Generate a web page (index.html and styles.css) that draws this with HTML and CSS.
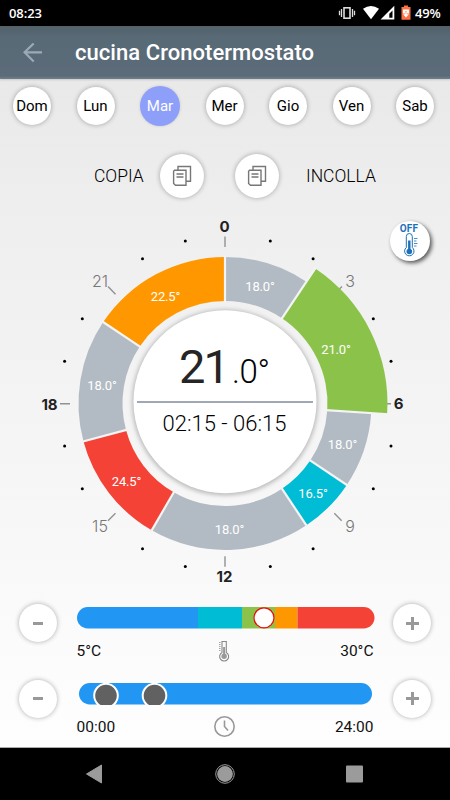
FILE: index.html
```html
<!DOCTYPE html>
<html lang="it">
<head>
<meta charset="utf-8">
<title>cucina Cronotermostato</title>
<link rel="stylesheet" href="styles.css">
</head>
<body>
<div class="screen">
  <header class="status">
    <span class="clock">08:23</span>
    <svg class="status-icons" width="80" height="26" viewBox="0 0 80 26">
      <g fill="none" stroke="#ddd" stroke-width="1.3"><rect x="9" y="7.8" width="6" height="10.4" stroke-width="1.6"/><path d="M6.500 9v8M4.500 10.800v4.400M17.500 9v8M19.500 10.800v4.400"/></g>
      <path fill="#fff" d="M28 8.800Q36 3.200 44 8.800L36 19.200Z"/>
      <path fill="#fff" fill-rule="evenodd" d="M59.300 5.800V19.500H45.500ZM57.500 10.500L54.300 13.700V17.800H57.500Z"/>
      <path fill="#ff7043" d="M69 5.500h4v1.500h2.500v12.700h-9V7H69Z"/>
      <path fill="#fff" d="M68 9.500h6v4h-2v-2h-2v2h-2zM70.300 12h1.400v2.200h2.200L71 17.400L68.100 14.200h2.200z"/>
    </svg>
    <span class="percent">49%</span>
  </header>
  <div class="appbar">
    <svg class="back" width="20" height="20" viewBox="0 0 20 20"><path d="M19 9.300H1.500M10.700 .500L1.500 9.300L10.700 18.500" fill="none" stroke="#9caab6" stroke-width="2.200"/></svg>
    <h1>cucina Cronotermostato</h1>
  </div>
  <nav class="days">
    <button>Dom</button><button>Lun</button><button class="active">Mar</button><button>Mer</button><button>Gio</button><button>Ven</button><button>Sab</button>
  </nav>
  <div class="clipboard">
    <span class="copy">COPIA</span>
    <button><svg width="20" height="22" viewBox="0 0 20 22"><path d="M6 4.600V1.500H18.500V16.300H14.500M2.500 5.300H14V20.300H3.500L1.600 18.500V6.200ZM4.500 9h7M4.500 12h7" fill="none" stroke="#777" stroke-width="1.400"/></svg></button>
    <button><svg width="20" height="22" viewBox="0 0 20 22"><path d="M6 4.600V1.500H18.500V16.300H14.500M2.500 5.300H14V20.300H3.500L1.600 18.500V6.200ZM4.500 9h7M4.500 12h7" fill="none" stroke="#777" stroke-width="1.400"/></svg></button>
    <span class="paste">INCOLLA</span>
  </div>
  <main class="dial">
    <svg id="dial" width="450" height="386" viewBox="0 209 450 386">
      <defs><filter id="soft" x="-20%" y="-20%" width="140%" height="140%"><feGaussianBlur stdDeviation="2.200"/></filter></defs>
      <g id="dots"></g>
      <path class="tick" d="M225 236.500V247M60 403.700H70M380 403.700H391M225 556.300V566.700M108 286.500L115.500 294.300M342 286.500L334 294.300M108 520.700L115.500 513.300M341.700 520.700L334.300 513.300"/>
      <g id="segments"></g>
      <circle cx="225" cy="402.500" r="93" class="halo" filter="url(#soft)"/>
      <circle cx="225" cy="401.700" r="91.500" fill="#fff"/>
      <path d="M137 402H313" stroke="#a0a7b5" stroke-width="2"/>
      <g class="hour major"><text x="224.500" y="232">0</text><text x="398.500" y="409">6</text><text x="224.500" y="582">12</text><text x="49.500" y="409.500">18</text></g>
      <g class="hour"><text x="350" y="286.500">3</text><text x="350" y="532">9</text><text x="100" y="532">15</text><text x="100" y="286.500">21</text></g>
      <g id="labels" class="seg-label"></g>
      <text class="big" x="179" y="383" textLength="51">21</text>
      <text class="decimal" x="232" y="383" textLength="38">.0°</text>
      <text class="range" x="224.500" y="431" textLength="124">02:15 - 06:15</text>
    </svg>
    <div class="off">
      <svg width="40" height="40" viewBox="0 0 40 40"><text class="off-text" x="19" y="11">OFF</text><g fill="none" stroke="#1d70b7" stroke-width="1"><path d="M16.300 26.500V15.500a3 3 0 0 1 6 0V26.500a4.700 4.700 0 1 1-6 0Z"/><path d="M24 17.500h3.500M24 20h2.500M24 22.500h3.500M24 25h2.500" stroke-width=".8"/></g><circle cx="19.300" cy="30.500" r="2.800" fill="#1d70b7"/><path d="M19.300 30.500V19.500" stroke="#1d70b7" stroke-width="2.400"/></svg>
    </div>
  </main>
  <section class="control temperature">
    <button class="minus" aria-label="-"></button>
    <div class="slider">
      <svg class="track" width="298" height="22" viewBox="0 0 298 22"><defs><clipPath id="t"><rect width="297.500" height="21.500" rx="10.750"/></clipPath></defs><g clip-path="url(#t)"><path fill="#2196f3" d="M0 0H121V22H0z"/><path fill="#00bcd4" d="M121 0H165V22H121z"/><path fill="#8bc34a" d="M165 0H198V22H165z"/><path fill="#ff9800" d="M198 0H220.500V22H198z"/><path fill="#f44336" d="M220.500 0H298V22H220.500z"/></g><circle cx="187" cy="10.800" r="10" fill="#fff" stroke="#f00c0c" stroke-width="1.200"/></svg>
      <div class="scale"><span>5°C</span>
      <svg width="16" height="24" viewBox="0 0 16 24"><path d="M5.500 13.500V2.500H9.800V13.500a4.500 4.500 0 1 1-4.300 0Z" fill="none" stroke="#888" stroke-width="1.100"/><circle cx="7.600" cy="17.300" r="2.700" fill="#999"/><path d="M7.600 17V8" stroke="#999" stroke-width="2"/><path d="M2.500 3.500h1.500M2.500 5.500h1.500M2.500 7.500h1.500M2.500 9.500h1.500M2.500 11.500h1.500" stroke="#999" stroke-width=".9"/></svg>
      <span>30°C</span></div>
    </div>
    <button class="plus" aria-label="+"></button>
  </section>
  <section class="control time">
    <button class="minus" aria-label="-"></button>
    <div class="slider">
      <svg class="track" width="298" height="22" viewBox="0 0 298 22"><rect x="2" width="293" height="21.500" rx="10.750" fill="#2196f3"/><g fill="#616161" stroke="#fff" stroke-width="2"><circle cx="29" cy="12.600" r="11.800"/><circle cx="77.500" cy="12.600" r="11.800"/></g></svg>
      <div class="scale"><span>00:00</span>
      <svg width="24" height="24" viewBox="0 0 24 24"><g fill="none" stroke="#999" stroke-width="1.600"><circle cx="12" cy="11.500" r="9.700"/><path d="M12 5.500V11.500L15.500 15.500"/></g></svg>
      <span>24:00</span></div>
    </div>
    <button class="plus" aria-label="+"></button>
  </section>
  <footer class="navbar">
    <svg width="20" height="20" viewBox="0 0 20 20"><path d="M1.500 10L16.500 1V19Z" fill="#9b9b9b" stroke="#9b9b9b" stroke-linejoin="round"/></svg>
    <svg width="20" height="20" viewBox="0 0 20 20"><circle cx="10" cy="10" r="9.300" fill="none" stroke="#9b9b9b"/><circle cx="10" cy="10" r="7.900" fill="#9b9b9b"/></svg>
    <svg width="20" height="20" viewBox="0 0 20 20"><rect x="1" y="1.500" width="17" height="17" rx="1" fill="#9b9b9b"/></svg>
  </footer>
</div>
<script src="dial.js"></script>
</body>
</html>
```
FILE: dial.js
```js
const cx = 225, cy = 403.5;
const point = (hour, r) => {
  const a = hour * Math.PI / 12;
  return [cx + r * Math.sin(a), cy - r * Math.cos(a)];
};
const schedule = [
  [0, 2.25, '18.0°', '#b2bbc3', 260, 290.5],
  [6.25, 8.25, '18.0°', '#b2bbc3', 342.5, 449],
  [8.25, 9.75, '16.5°', '#00bcd4', 313, 497.500],
  [9.75, 14, '18.0°', '#b2bbc3', 229.5, 534],
  [14, 17, '24.5°', '#f44336', 126.5, 486],
  [17, 20.25, '18.0°', '#b2bbc3', 102, 390],
  [20.25, 24, '22.5°', '#ff9800', 165.5, 300.5],
  [2.25, 6.25, '21.0°', '#8bc34a', 336, 354, 162.5]
];
let shapes = '', labels = '';
for (const [start, end, text, color, x, y, outer = 146.5] of schedule) {
  const inner = 102.5;
  shapes += `<path fill="${color}" d="M${point(start, outer)}A${outer} ${outer} 0 0 1 ${point(end, outer)}L${point(end, inner)}A${inner} ${inner} 0 0 0 ${point(start, inner)}Z"/>`;
  labels += `<text x="${x}" y="${y}">${text}</text>`;
}
for (const s of schedule) {
  shapes += `<path class="gap" d="M${point(s[0], 101)}L${point(s[0], s[0] === 2.25 || s[0] === 6.25 ? 164 : 148)}"/>`;
}
document.getElementById('segments').innerHTML = shapes;
document.getElementById('labels').innerHTML = labels;
let dots = '';
for (const [dx, dy] of [[42.5, 162.7], [85.3, 145], [145.5, 85], [163.2, 42.4]]) {
  for (const sx of [-1, 1]) for (const sy of [-1, 1]) {
    dots += `<circle cx="${227.8 + sx * dx}" cy="${403.7 + sy * dy}" r="1.5"/>`;
  }
}
document.getElementById('dots').innerHTML = dots;
```
FILE: styles.css
```css
* { box-sizing: border-box; }
body { margin: 0; font-family: Roboto, "Liberation Sans", sans-serif; color: #111; }
button { border: 0; padding: 0; font: inherit; background: #fff; border-radius: 50%; box-shadow: 0 0 5px rgba(0,0,0,.32); display: flex; align-items: center; justify-content: center; }
svg { display: block; flex: none; }
.screen { width: 450px; height: 800px; display: flex; flex-direction: column; background: linear-gradient(#e9e9e9 78px, #efefef 230px, #f6f6f6 480px, #fdfdfd 700px, #fff); overflow: hidden; }
.status { height: 26px; flex: none; background: #000; color: #fff; display: flex; align-items: center; padding: 0 9px; font-size: 14px; font-weight: 500; }
.clock { letter-spacing: -.1px; font-family: "Open Sans", sans-serif; font-weight: 600; font-size: 13px; }
.status-icons { margin-left: auto; }
.percent { width: 26px; font: 600 13px "Open Sans", sans-serif; letter-spacing: -.2px; white-space: nowrap; }
.appbar { height: 53px; flex: none; display: flex; align-items: center; padding-left: 23px; background: linear-gradient(#526169, #596a77 12px, #5b6b79 50px, #71808b); box-shadow: 0 1px 2px rgba(0,0,0,.15); }
h1 { margin: 1px 0 0 32px; color: #fff; font-size: 22px; font-weight: 500; line-height: 26px; letter-spacing: .05px; }
.days { height: 54px; flex: none; display: flex; justify-content: space-between; align-items: center; padding: 0 16px 0 13px; }
.days button { width: 38px; height: 38px; font-size: 15px; }
.days .active { width: 40px; height: 40px; background: #8e9ffa; color: #fff; box-shadow: 0 0 3px rgba(0,0,0,.15); }
.clipboard { height: 76px; flex: none; display: flex; align-items: center; padding: 9px 0 0 94px; font-size: 17.500px; font-weight: 300; color: #000; }
.clipboard button { width: 44px; height: 44px; }
.copy { width: 66px; }
.clipboard button + button { margin-left: 31px; }
.paste { margin-left: 27px; }
.dial { position: relative; height: 386px; flex: none; }
.tick { stroke: #929292; stroke-width: 1.4; fill: none; }
.gap { stroke: #f4f4f4; stroke-width: 2.2; }
.halo { fill: #bbb; }
.hour { font: 300 16px Inter, sans-serif; fill: #777; text-anchor: middle; }
.hour.major { font-weight: 700; font-size: 15px; fill: #222; }
.seg-label { fill: #fff; font-size: 13px; letter-spacing: -.15px; text-anchor: middle; }
.big { font-size: 47px; fill: #252525; }
.decimal { font-size: 33px; font-weight: 300; fill: #000; }
.range { font-size: 22px; font-weight: 300; fill: #000; text-anchor: middle; }
.off { position: absolute; left: 390px; top: 12px; width: 40px; height: 40px; border-radius: 50%; background: #fff; box-shadow: 2px 2px 4px rgba(0,0,0,.65); }
.off-text { font: 700 9.500px Roboto, sans-serif; fill: #1d70b7; text-anchor: middle; }
.control { display: flex; flex: none; height: 75.500px; padding: 9px 19px 0; }
.control button { width: 38px; height: 38px; }
.slider { width: 298px; margin: 3px 18.500px 0 19.500px; }
.scale { display: grid; grid-template-columns: 1fr 24px 1fr; align-items: center; margin-top: 10px; width: 297px; height: 24px; font-size: 15.500px; justify-items: center; }
.scale svg { transform: translateX(-.5px); }
.scale span:first-child { justify-self: start; }
.scale span:last-child { justify-self: end; }
.minus::before, .plus::before { content: ""; width: 10px; height: 3px; background: #999; }
.plus::before { width: 13px; height: 13px; background: linear-gradient(#999, #999) center / 13px 3px no-repeat, linear-gradient(#999, #999) center / 3px 13px no-repeat; }
.navbar { height: 53px; flex: none; margin-top: auto; background: #000; border-top: 1px solid #aaa; display: flex; justify-content: center; align-items: center; gap: 110px; }
.off-text { font-size: 10px; letter-spacing: .2px; }
```
